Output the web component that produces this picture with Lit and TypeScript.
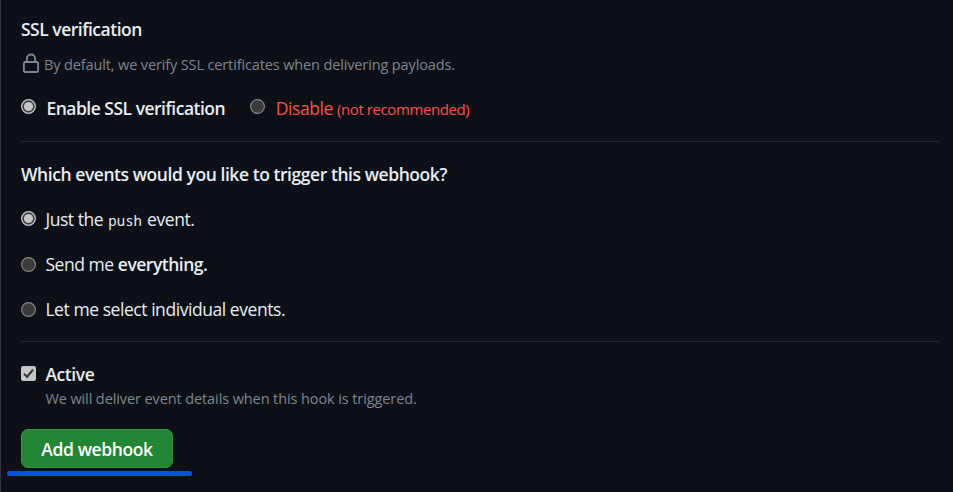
import { LitElement, html, css } from "lit";
import { customElement, property } from "lit/decorators.js";

@customElement("choice-mark")
class ChoiceMark extends LitElement {
  @property({ type: Boolean }) checked = false;
  static styles = css`
    :host { display: block; width: 15px; height: 15px; flex: none; }
    svg { display: block; }
  `;
  render() {
    return this.checked
      ? html`<svg width="15" height="15" viewBox="0 0 15 15"><circle cx="7.5" cy="7.5" r="6.8" fill="#3b3b3b" stroke="#c6c6c6" stroke-width="1.3"/><circle cx="7.5" cy="7.5" r="4.6" fill="#c6c6c6"/></svg>`
      : html`<svg width="15" height="15" viewBox="0 0 15 15"><circle cx="7.5" cy="7.5" r="6.9" fill="#3b3b3b" stroke="#858585" stroke-width="1.2"/></svg>`;
  }
}

@customElement("app-root")
class AppRoot extends LitElement {
  static styles = css`
    :host { display: block; }
    .page {
      box-sizing: border-box; width: 953px; height: 492px; overflow: hidden;
      background: #0d1117; border-left: 1px solid #30363d;
      padding: 17px 14px 0 20px; color: #e6edf3;
      font-family: "Open Sans", "Noto Sans", sans-serif; font-size: 17.5px;
      white-space: nowrap; display: flex; flex-direction: column;
    }
    .title { height: 24px; line-height: 24px; font-weight: 600; letter-spacing: -0.5px; }
    .muted { color: #7d8590; font-size: 14.5px; letter-spacing: -0.13px; line-height: 20px; height: 20px; }
    .lock-row { display: flex; margin-top: 14px; padding-left: 1px; }
    .lock { flex: none; margin: -2px 4px 0 0; }
    .row { display: flex; height: 24px; line-height: 24px; }
    .row choice-mark { margin: 5px 9.4px 0 0; }
    .row .raised { margin-top: 4px; }
    .first { margin-top: 21px; }
    .first choice-mark { margin: 3px 10.4px 0 0; }
    .first choice-mark.second { margin: 3px 11px 0 24.6px; }
    .text { letter-spacing: -0.44px; }
    .strong { font-weight: 600; letter-spacing: -0.5px; }
    .danger { color: #f85149; letter-spacing: -0.42px; }
    .small { font-size: 15px; }
    .rule { height: 1px; background: #21262d; flex: none; }
    .r1 { margin-top: 21px; }
    .r2 { margin-top: 20px; }
    .events { margin-top: 20px; letter-spacing: -0.44px; }
    .opt { margin-top: 21px; }
    code { font-family: "Noto Sans Mono", "DejaVu Sans Mono", monospace; font-size: 14px; letter-spacing: 0; margin: 0 1px; }
    .box { width: 15px; height: 15px; margin: 4px 9.4px 0 0; flex: none; }
    .active { margin-top: 20px; }
    .active .strong { letter-spacing: -0.4px; }
    .hint { margin-left: 24.4px; margin-top: 3px; letter-spacing: -0.1px; }
    .button {
      box-sizing: border-box; width: 152px; height: 39px; margin-top: 20px; padding: 1px 0 0;
      border: 1px solid #369446; border-radius: 7px; background: #238636; color: #fff;
      font: 600 17.5px/36px "Open Sans", "Noto Sans", sans-serif; letter-spacing: -0.4px; text-align: center;
    }
    .button span { display: block; padding-top: 1px; line-height: 35px; }
    .underline { width: 185px; height: 5px; border-radius: 3px; background: #0450e1; margin: 3px 0 0 -14px; }
  `;
  render() {
    return html`<main class="page">
      <div class="title"><span>SSL verification</span></div>
      <div class="muted lock-row">
        <svg class="lock" width="18" height="21" viewBox="0 0 18 21" fill="none" stroke="#7d8590" stroke-width="1.9"><rect x="1.9" y="9" width="14.2" height="10" rx="1.2"/><path d="M4.9 9V5.6a4.1 4.1 0 0 1 8.2 0V9"/></svg>
        <span>By default, we verify SSL certificates when delivering payloads.</span>
      </div>
      <div class="row first">
        <choice-mark checked></choice-mark><span class="strong">Enable SSL verification</span>
        <choice-mark class="second"></choice-mark><span class="danger">Disable <span class="small">(not recommended)</span></span>
      </div>
      <div class="rule r1"></div>
      <div class="title events"><span>Which events would you like to trigger this webhook?</span></div>
      <div class="row opt"><choice-mark class="raised" checked></choice-mark><span class="text">Just the <code>push</code> event.</span></div>
      <div class="row opt"><choice-mark></choice-mark><span class="text">Send me <span class="strong">everything.</span></span></div>
      <div class="row opt"><choice-mark></choice-mark><span class="text">Let me select individual events.</span></div>
      <div class="rule r2"></div>
      <div class="row active">
        <svg class="box" viewBox="0 0 15 15"><rect width="15" height="15" rx="2.2" fill="#c6c6c6"/><path d="M3 7.8l3.1 3L12 3.8" fill="none" stroke="#3b3b3b" stroke-width="2.2"/></svg>
        <span class="strong">Active</span>
      </div>
      <div class="muted hint">We will deliver event details when this hook is triggered.</div>
      <button class="button"><span>Add webhook</span></button>
      <div class="underline"></div>
    </main>`;
  }
}
